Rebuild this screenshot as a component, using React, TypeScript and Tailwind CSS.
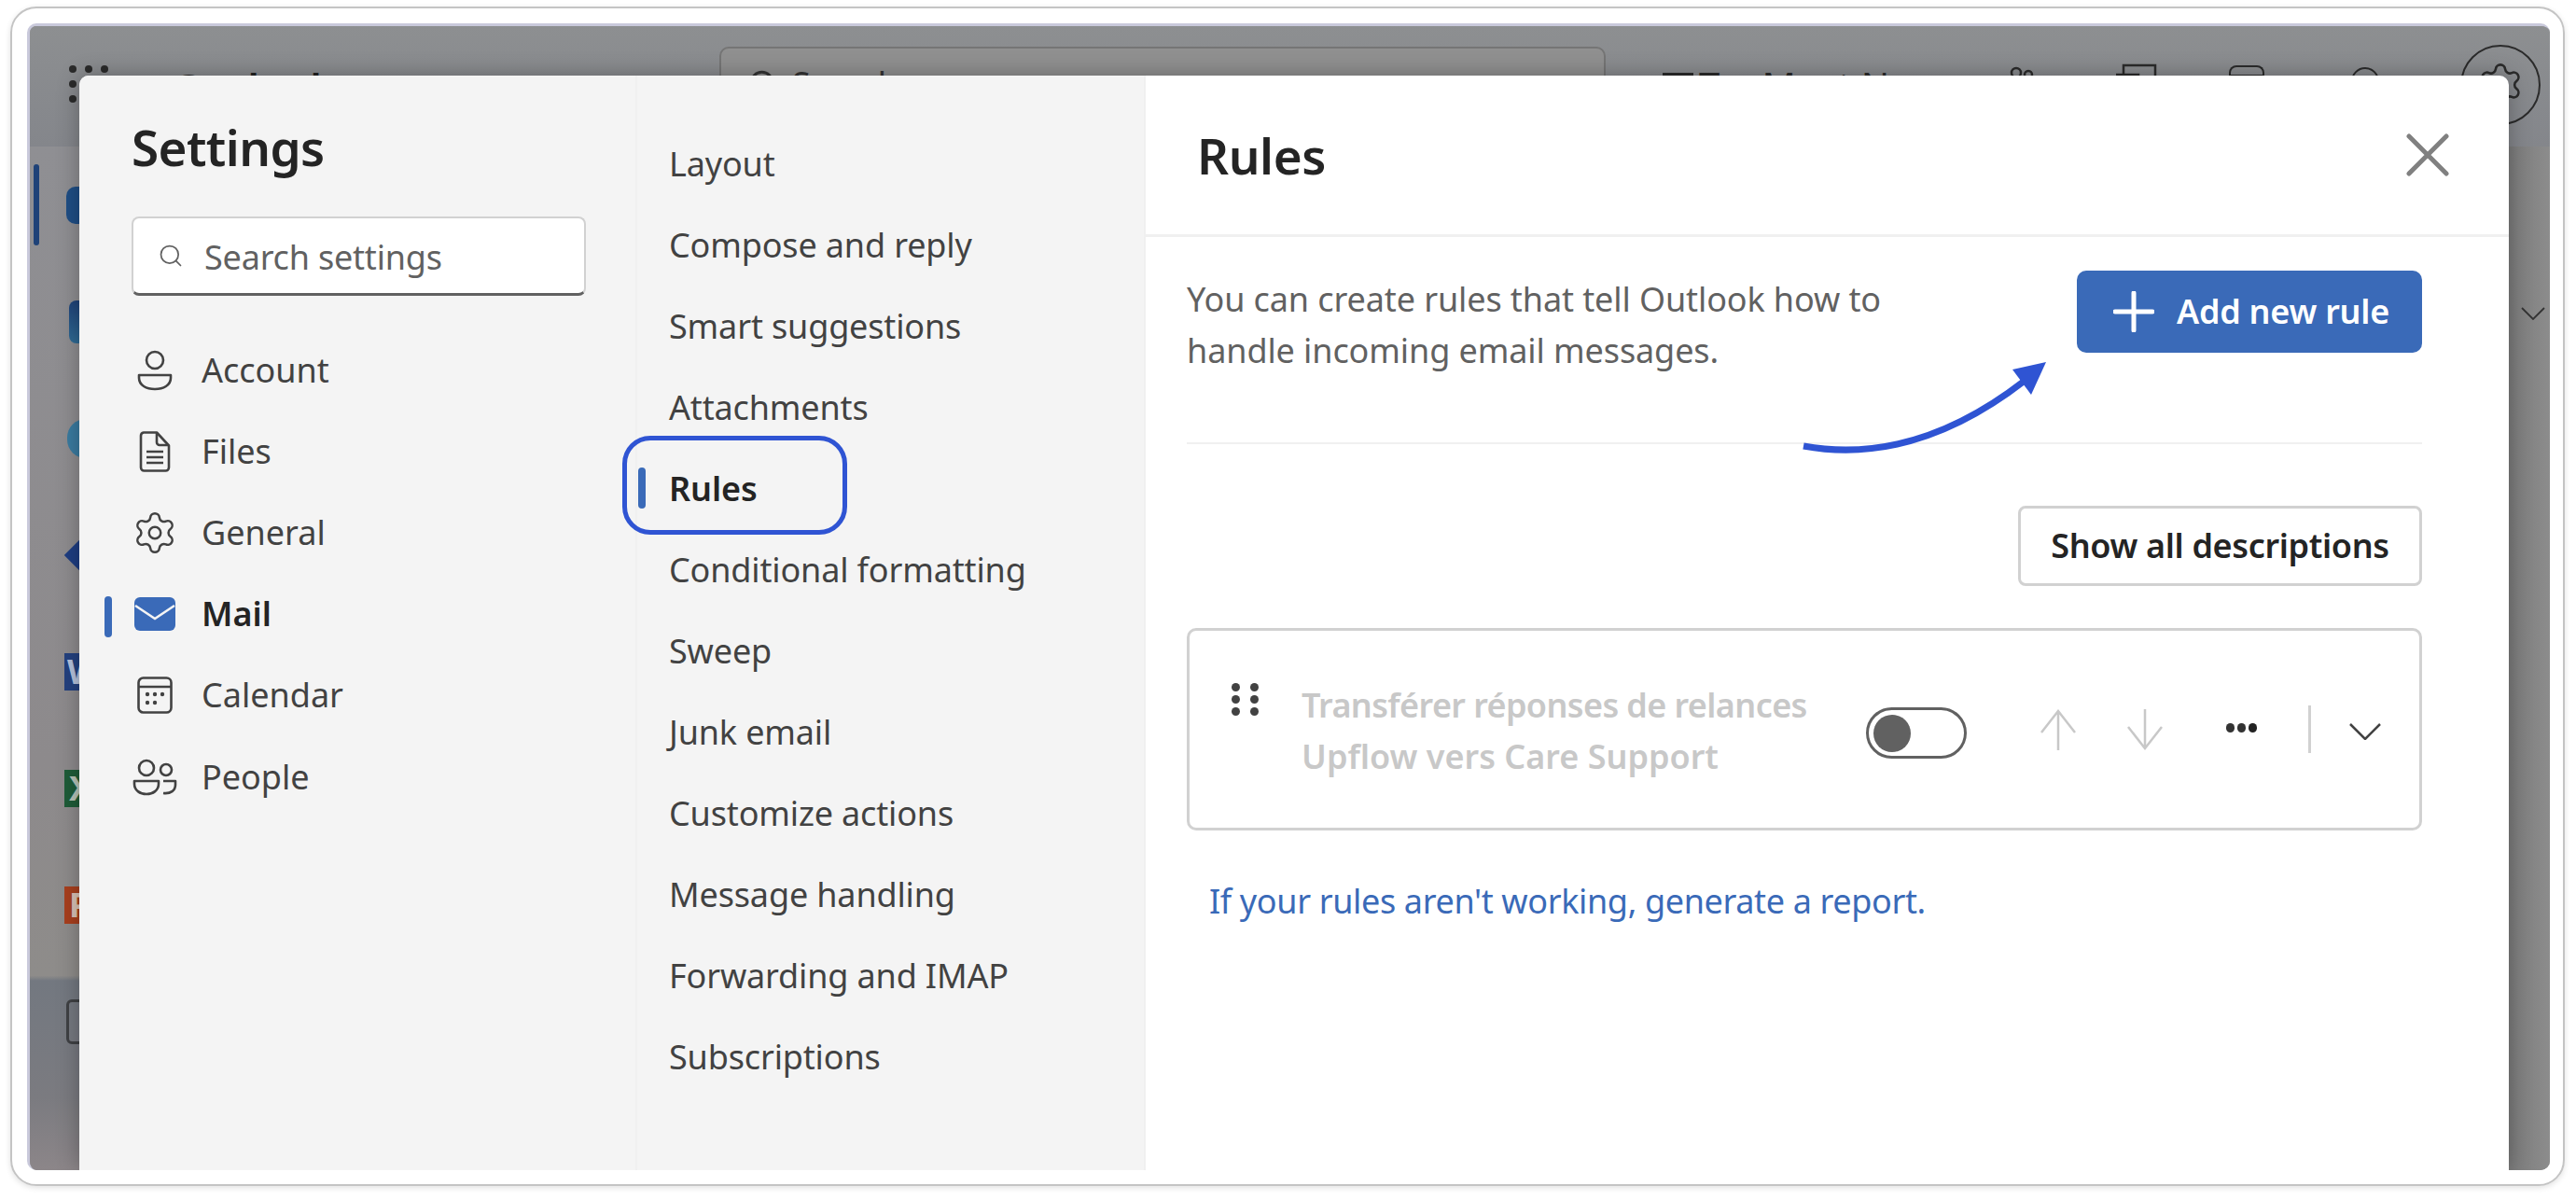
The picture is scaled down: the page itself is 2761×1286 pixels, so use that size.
import { Search, Settings } from "lucide-react";

const sections = ["Layout", "Compose and reply", "Smart suggestions", "Attachments", "Rules", "Conditional formatting", "Sweep", "Junk email", "Customize actions", "Message handling", "Forwarding and IMAP", "Subscriptions"];

const AccountIcon = () => (
  <svg viewBox="0 0 40 44" className="w-[40px] h-[44px]" fill="none" stroke="#424242" strokeWidth="2.6">
    <circle cx="20" cy="11" r="9" />
    <path d="M3 27h34v3c0 8-8 12-17 12S3 38 3 30z" strokeLinejoin="round" />
  </svg>
);

const FilesIcon = () => (
  <svg viewBox="0 0 34 44" className="w-[34px] h-[44px]" fill="none" stroke="#424242" strokeWidth="2.6" strokeLinejoin="round">
    <path d="M5 1.5h14l13 14V39a3.5 3.5 0 0 1-3.5 3.5h-23A3.5 3.5 0 0 1 2 39V5a3.500 3.500 0 0 1 3-3.500z" />
    <path d="M19 2v10a3 3 0 0 0 3 3h9M8 22h18M8 28h18M8 34h18" />
  </svg>
);

const MailIcon = () => (
  <svg viewBox="0 0 44 36" className="w-[44px] h-[36px]">
    <rect width="44" height="36" rx="6" fill="#3a6ab8" />
    <path d="M1 9l21 14L43 9" fill="none" stroke="#f4f4f4" strokeWidth="2.6" />
  </svg>
);

const CalendarIcon = () => (
  <svg viewBox="0 0 38 40" className="w-[38px] h-[40px]" fill="none" stroke="#424242" strokeWidth="2.6">
    <rect x="1.500" y="1.500" width="35" height="37" rx="5" />
    <path d="M2 11h34" />
    <g fill="#424242" stroke="none">
      <circle cx="11" cy="19" r="2.200" />
      <circle cx="19" cy="19" r="2.200" />
      <circle cx="27" cy="19" r="2.200" />
      <circle cx="11" cy="28" r="2.200" />
      <circle cx="19" cy="28" r="2.200" />
    </g>
  </svg>
);

const PeopleIcon = () => (
  <svg viewBox="0 0 48 40" className="w-[48px] h-[40px]" fill="none" stroke="#424242" strokeWidth="2.6">
    <circle cx="15" cy="10" r="8" />
    <circle cx="36" cy="12" r="6" />
    <path d="M2 24h26v3c0 7-6 11-13 11S2 34 2 27zM33 37c8 1 13-3 13-9v-4H33" strokeLinejoin="round" />
  </svg>
);

const accounts = [
  { label: "Account", icon: <AccountIcon /> },
  { label: "Files", icon: <FilesIcon /> },
  { label: "General", icon: <Settings className="w-[52px] h-[52px] text-[#424242]" strokeWidth={1.2} /> },
  { label: "Mail", icon: <MailIcon />, active: true },
  { label: "Calendar", icon: <CalendarIcon /> },
  { label: "People", icon: <PeopleIcon /> },
];

const RailIcon = ({ children, active }: { children: React.ReactNode; active?: boolean }) => (
  <div className={active ? "h-[125px] flex items-center pl-[4px] gap-[29px]" : "h-[125px] flex items-center pl-[37px]"}>
    {active && <div className="w-[6px] h-[87px] rounded-full bg-[#1f4278] shrink-0" />}
    {children}
  </div>
);

const App = () => {
  return (
    <div className="h-screen w-full bg-white pt-[7px] pl-[11px] pr-[12px] pb-[15px] font-['Noto_Sans',sans-serif] overflow-hidden">
      <div className="h-full border-2 border-[#c4c4c4] rounded-[28px] pt-[16px] pl-[16px] pr-[14px] pb-[15px] shadow-[0_2px_6px_rgba(0,0,0,0.12)]">
        {/* dimmed outlook window */}
        <div className="relative h-full flex flex-col overflow-hidden rounded-[10px] border-l-[3px] border-t-[3px] border-[#c9c9db] bg-[#8a8a8a]">
          <div className="h-[129px] shrink-0 flex items-start bg-gradient-to-b from-[#8d8f91] to-[#84868b]">
            {/* launcher */}
            <div className="ml-[42px] mt-[42px] grid grid-cols-3 gap-x-[9px] gap-y-[8px] shrink-0">
              {Array.from({ length: 9 }).map((_, i) => (
                <div key={i} className="w-[8px] h-[8px] rounded-full bg-[#2b2b2b]" />
              ))}
            </div>
            <span className="ml-[69px] mt-[44px] w-[586px] text-[44px] leading-none font-semibold text-[#222] shrink-0">Outlook</span>
            <div className="mt-[22px] w-[950px] h-[80px] rounded-[10px] border-2 border-[#757575] bg-[#909090] flex items-center pl-[28px] gap-[14px] shrink-0">
              <Search className="w-[34px] h-[34px] text-[#333]" />
              <span className="text-[36px] text-[#333]">Search</span>
            </div>
            <div className="ml-[61px] w-[372px] flex items-start shrink-0">
              <div className="mt-[50px] w-[33px] h-[30px] bg-[#2b2b2b]" />
              <span className="ml-[6px] mt-[44px] text-[40px] leading-none text-[#2b2b2b]">Try Meet Now</span>
            </div>
            <svg viewBox="0 0 26 26" className="mt-[43px] w-[26px] h-[26px] shrink-0" fill="none" stroke="#2b2b2b" strokeWidth="2.500">
              <circle cx="7" cy="7" r="5" />
              <circle cx="20" cy="9" r="4" />
            </svg>
            <svg viewBox="0 0 44 30" className="ml-[88px] mt-[40px] w-[44px] h-[30px] shrink-0" fill="none" stroke="#2b2b2b" strokeWidth="2.500">
              <path d="M8 12V2h34v24" />
              <rect x="0" y="12" width="24" height="14" fill="#2b2b2b" />
            </svg>
            <div className="ml-[77px] mt-[42px] w-[38px] h-[30px] rounded-t-[8px] border-2 border-b-0 border-[#2b2b2b] shrink-0">
              <div className="h-[10px] border-b-2 border-[#2b2b2b]" />
            </div>
            <div className="ml-[93px] mt-[44px] w-[30px] h-[30px] rounded-full border-2 border-[#2b2b2b] shrink-0" />
            <div className="ml-[87px] mt-[20px] w-[86px] h-[86px] rounded-full border-2 border-[#2b2b2b] flex items-center justify-center shrink-0">
              <Settings className="w-[52px] h-[52px] text-[#2b2b2b]" strokeWidth={1.2} />
            </div>
          </div>

          <div className="flex-1 flex min-h-0">
            <div className="w-[53px] shrink-0 flex flex-col bg-[linear-gradient(180deg,#8f8f93_0%,#8d8a8c_60%,#8e8c8a_81%,#737880_81.5%,#7b7b80_93%,#8c8689_100%)]">
              <RailIcon active>
                <div className="w-[40px] h-[40px] rounded-[10px] bg-[#1f4e85] shrink-0" />
              </RailIcon>
              <RailIcon>
                <div className="w-[40px] h-[46px] rounded-[8px] bg-gradient-to-b from-[#1f4278] to-[#2f6b94] ml-[5px] shrink-0" />
              </RailIcon>
              <RailIcon>
                <div className="w-[40px] h-[42px] rounded-full bg-[#3a7ba0] ml-[3px] shrink-0" />
              </RailIcon>
              <RailIcon>
                <div className="w-[30px] h-[30px] rotate-45 bg-[#1e3d82] ml-[6px] shrink-0" />
              </RailIcon>
              <RailIcon>
                <div className="w-[40px] h-[40px] bg-[#24417f] text-[36px] leading-[40px] font-bold text-[#b7c3dd] pl-[3px] shrink-0">W</div>
              </RailIcon>
              <RailIcon>
                <div className="w-[40px] h-[40px] bg-[#1e5c38] text-[36px] leading-[40px] font-bold text-[#b7c3b7] pl-[5px] shrink-0">X</div>
              </RailIcon>
              <RailIcon>
                <div className="w-[40px] h-[40px] bg-[#a83f1e] text-[36px] leading-[40px] font-bold text-[#d9c3b7] pl-[5px] shrink-0">P</div>
              </RailIcon>
              <RailIcon>
                <div className="w-[40px] h-[48px] rounded-[6px] border-[3px] border-[#3f4144] ml-[2px] shrink-0" />
              </RailIcon>
            </div>
            <div className="flex-1" />
            <div className="w-[44px] shrink-0 flex flex-col items-end pt-[172px] pr-[5px] bg-gradient-to-r from-[#7c7c7c] to-[#8c8c8c]">
              <svg viewBox="0 0 26 14" className="w-[26px] h-[14px]" fill="none" stroke="#333" strokeWidth="1.800">
                <path d="M1 1l12 12L25 1" />
              </svg>
            </div>
          </div>

          {/* settings dialog */}
          <div className="absolute left-[53px] top-[53px] right-[44px] bottom-0 flex rounded-t-[10px] overflow-hidden bg-white shadow-[0_0_24px_rgba(0,0,0,0.3)]">
            <div className="w-[598px] shrink-0 bg-[#f4f4f4] border-r-2 border-[#f0f0f0] pl-[56px]">
              <h1 className="pt-[47px] text-[53px] leading-[60px] tracking-[-0.6px] font-semibold text-[#242424]">Settings</h1>
              <div className="mt-[44px] w-[487px] h-[85px] bg-white rounded-[8px] border-2 border-b-[3px] border-[#d1d1d1] border-b-[#616161] flex items-center pl-[26px] gap-[22px]">
                <Search className="w-[28px] h-[28px] text-[#616161]" strokeWidth={1.5} />
                <span className="pt-[4px] text-[36px] tracking-[-0.2px] text-[#616161]">Search settings</span>
              </div>
              <div className="mt-[36px]">
                {accounts.map((a) => (
                  <div key={a.label} className="relative h-[87.200px] flex items-center">
                    {a.active && <div className="absolute -left-[29px] top-[24px] w-[8px] h-[44px] rounded-full bg-[#3a6ab8]" />}
                    <div className="w-[50px] flex justify-center">{a.icon}</div>
                    <span className={a.active ? "ml-[25px] text-[36px] font-semibold text-[#242424]" : "ml-[25px] text-[36px] text-[#424242]"}>{a.label}</span>
                  </div>
                ))}
              </div>
            </div>

            <div className="relative w-[545px] shrink-0 bg-[#f4f4f4] border-r-2 border-[#f0f0f0] pt-[51px] pl-[34px]">
              {sections.map((s) => (
                <div key={s} className="relative h-[87px] flex items-center">
                  {s === "Rules" && <div className="absolute -left-[33px] top-[21px] w-[8px] h-[44px] rounded-full bg-[#3a6ab8]" />}
                  <span className={s === "Rules" ? "text-[36px] tracking-[-0.1px] font-semibold text-[#242424]" : "text-[36px] tracking-[-0.15px] text-[#424242]"}>{s}</span>
                </div>
              ))}
              <div className="absolute -left-[16px] top-[386px] w-[241px] h-[106px] rounded-[30px] border-[5px] border-[#2f54d3]" />
            </div>

            <div className="relative flex-1">
              <div className="h-[173px] border-b-[3px] border-[#f0f0f0] flex items-center justify-between pl-[55px] pr-[64px]">
                <h2 className="pt-[2px] text-[53px] tracking-[-0.4px] font-semibold text-[#242424]">Rules</h2>
                <svg viewBox="0 0 46 46" className="w-[46px] h-[46px]" stroke="#808080" strokeWidth="5" strokeLinecap="round">
                  <path d="M3 3l40 40M43 3L3 43" />
                </svg>
              </div>
              <div className="pl-[44px] pr-[93px] flex flex-col">
                <div className="mt-[36px] flex justify-between">
                  <p className="pt-[3px] w-[800px] text-[36px] leading-[55px] tracking-[-0.1px] text-[#616161]">You can create rules that tell Outlook how to handle incoming email messages.</p>
                  <button className="w-[370px] h-[88px] rounded-[10px] bg-[#3a6ab8] flex items-center pl-[39px] gap-[24px] text-[36px] tracking-[-0.25px] font-semibold text-white">
                    <svg viewBox="0 0 44 44" className="w-[44px] h-[44px]" stroke="white" strokeWidth="5" strokeLinecap="round">
                      <path d="M22 2v40M2 22h40" />
                    </svg>
                    Add new rule
                  </button>
                </div>
                <div className="mt-[71px] border-t-2 border-[#f0f0f0]" />
                <button className="self-end mt-[66px] w-[433px] h-[86px] rounded-[8px] border-[3px] border-[#d1d1d1] text-[36px] tracking-[-0.35px] font-semibold text-[#242424]">Show all descriptions</button>
                <div className="mt-[45px] h-[217px] rounded-[10px] border-[3px] border-[#d1d1d1] flex items-start pl-[45px]">
                  <div className="mt-[56px] w-[29px] grid grid-cols-2 gap-x-[11px] gap-y-[4px] shrink-0">
                    {Array.from({ length: 6 }).map((_, i) => (
                      <div key={i} className="w-[9px] h-[9px] rounded-full bg-[#424242]" />
                    ))}
                  </div>
                  <div className="ml-[46px] mt-[52px] w-[562px] shrink-0 text-[36px] leading-[55px] font-semibold text-[#c8c8c8]">
                    <div className="tracking-[-0.6px]">Transférer réponses de relances</div>
                    <div>Upflow vers Care Support</div>
                  </div>
                  <div className="ml-[43px] mt-[82px] w-[108px] h-[55px] rounded-full border-[3px] border-[#616161] flex items-center pl-[5px] shrink-0">
                    <div className="w-[40px] h-[40px] rounded-full bg-[#616161]" />
                  </div>
                  <svg viewBox="0 0 40 44" className="ml-[78px] mt-[84px] w-[40px] h-[44px]" fill="none" stroke="#c8c8c8" strokeWidth="2.500">
                    <path d="M20 44V2M2 25L20 2l18 23" />
                  </svg>
                  <svg viewBox="0 0 40 44" className="ml-[53px] mt-[84px] w-[40px] h-[44px]" fill="none" stroke="#c8c8c8" strokeWidth="2.500">
                    <path d="M20 0v42M2 19l18 23 18-23" />
                  </svg>
                  <div className="ml-[67px] mt-[99px] flex gap-[3px]">
                    <div className="w-[9px] h-[10px] rounded-full bg-[#333]" />
                    <div className="w-[9px] h-[10px] rounded-full bg-[#333]" />
                    <div className="w-[9px] h-[10px] rounded-full bg-[#222]" />
                  </div>
                  <div className="ml-[55px] mt-[80px] w-[3px] h-[51px] bg-[#d1d1d1]" />
                  <svg viewBox="0 0 34 18" className="ml-[41px] mt-[99px] w-[34px] h-[18px]" fill="none" stroke="#424242" strokeWidth="2.500">
                    <path d="M1 1l16 16L33 1" />
                  </svg>
                </div>
                <a className="mt-[48px] pl-[24px] text-[36px] leading-[55px] tracking-[-0.36px] text-[#3a6ab8]">If your rules aren't working, generate a report.</a>
              </div>

              {/* annotation arrow */}
              <svg viewBox="0 0 280 120" className="absolute left-[697px] top-[299px] w-[280px] h-[120px]">
                <path d="M8 98C85 112 165 90 245 28" fill="none" stroke="#2f54d3" strokeWidth="7" />
                <path d="M268 8L232 16L252 43z" fill="#2f54d3" />
              </svg>
            </div>
          </div>
        </div>
      </div>
    </div>
  );
};

export default App;
